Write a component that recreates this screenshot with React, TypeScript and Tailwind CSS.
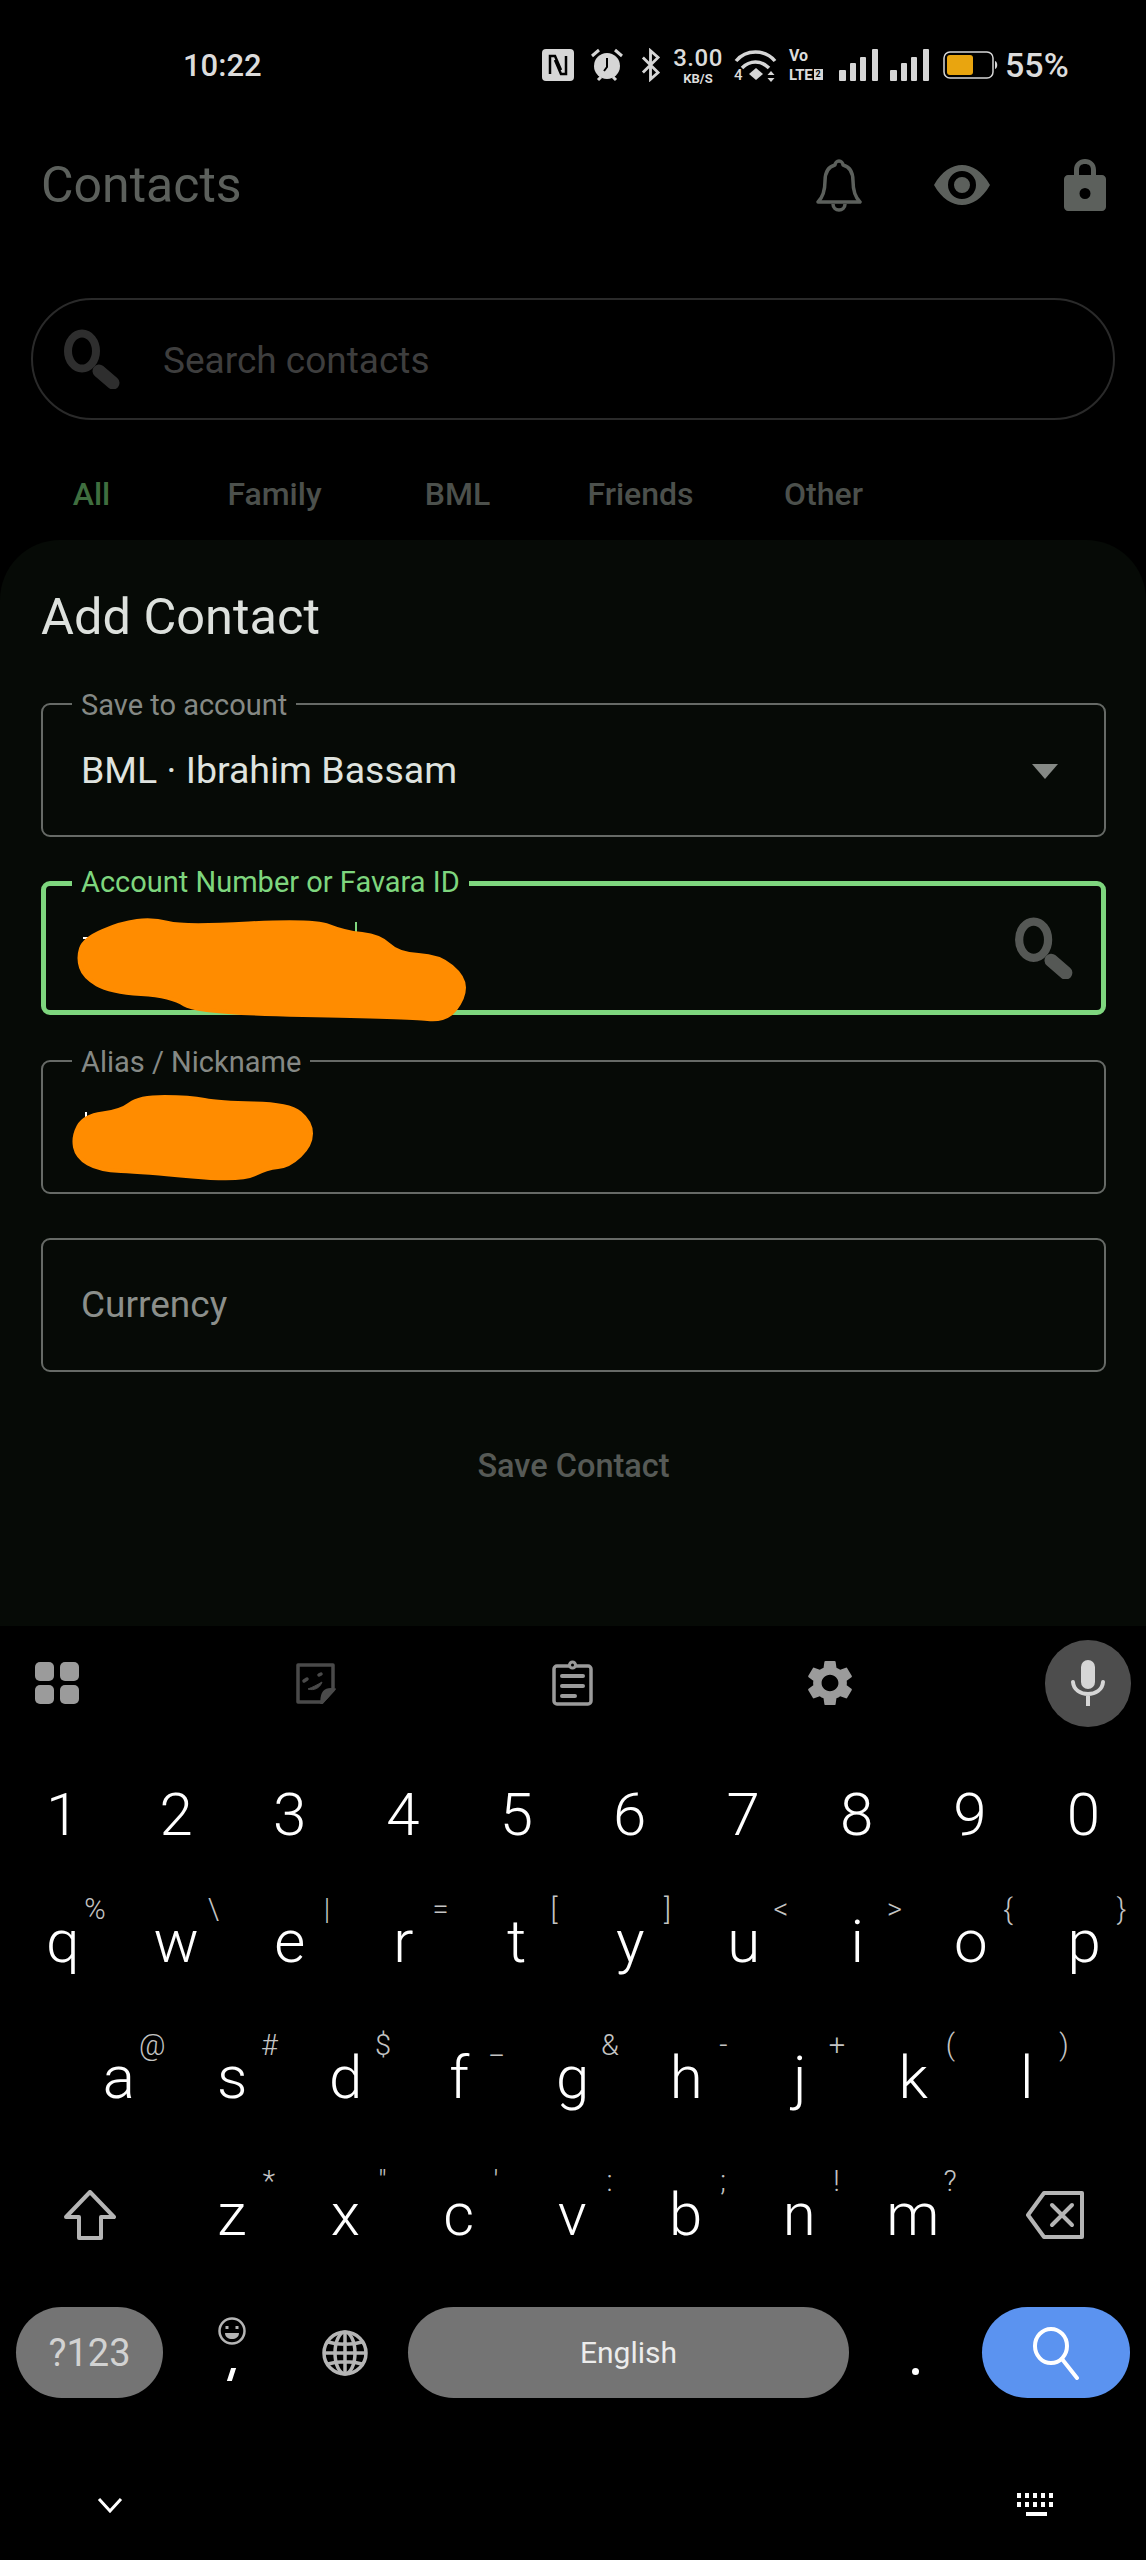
import React from "react";

const numberRow = ["1", "2", "3", "4", "5", "6", "7", "8", "9", "0"];
const topRow = [
  ["q", "%"], ["w", "\\"], ["e", "|"], ["r", "="], ["t", "["],
  ["y", "]"], ["u", "<"], ["i", ">"], ["o", "{"], ["p", "}"],
];
const homeRow = [
  ["a", "@"], ["s", "#"], ["d", "$"], ["f", "_"], ["g", "&"],
  ["h", "-"], ["j", "+"], ["k", "("], ["l", ")"],
];
const bottomRow = [
  ["z", "*"], ["x", '"'], ["c", "'"], ["v", ":"], ["b", ";"], ["n", "!"], ["m", "?"],
];

const blobOne = [
  [78, 959], [84, 940], [121, 924], [153, 920], [183, 928], [314, 921], [344, 933], [380, 937],
  [398, 955], [439, 957], [464, 978], [464, 999], [446, 1022], [409, 1018], [197, 1014],
  [172, 997], [110, 993], [84, 978],
];
const blobTwo = [
  [73, 1137], [84, 1116], [121, 1111], [139, 1097], [190, 1097], [219, 1103], [289, 1104],
  [311, 1122], [311, 1145], [289, 1166], [267, 1168], [241, 1181], [143, 1172], [99, 1170],
  [77, 1157],
];

// rounds the scribble: corners become curves through the edge midpoints
function blobPath(points: number[][]) {
  const mid = (a: number[], b: number[]) => [(a[0] + b[0]) / 2, (a[1] + b[1]) / 2];
  const start = mid(points[points.length - 1], points[0]);
  let d = `M${start[0]} ${start[1]}`;
  points.forEach((p, i) => {
    const m = mid(p, points[(i + 1) % points.length]);
    d += `Q${p[0]} ${p[1]} ${m[0]} ${m[1]}`;
  });
  return d + "Z";
}

function Magnifier({ className }: { className: string }) {
  return (
    <svg viewBox="0 0 60 60" className={className} fill="none" stroke="currentColor">
      <ellipse cx="19" cy="22" rx="14" ry="17.5" strokeWidth="8" />
      <path d="M36 42 L50 54" strokeWidth="13" strokeLinecap="round" />
    </svg>
  );
}

function Key({ letter, hint }: { letter: string; hint: string }) {
  const shifted = hint === "%" || hint === "@";
  return (
    <div className="relative flex h-full w-[113.5px] shrink-0 items-center justify-center">
      <span className="text-[60px] font-light leading-none text-white">{letter}</span>
      <span
        className={`absolute top-[19px] w-[24px] text-center text-[29px] font-light leading-[32px] text-[#c4c4c4] ${
          shifted ? "left-[77px]" : "left-[82px]"
        }`}
      >
        {hint}
      </span>
    </div>
  );
}

function Field({
  label,
  active,
  children,
}: {
  label?: string;
  active?: boolean;
  children?: React.ReactNode;
}) {
  return (
    <div
      className={`relative flex h-[134px] items-center rounded-[9px] pl-[38px] ${
        active ? "border-[5px] border-[#7ed67e]" : "border-2 border-[#666a66]"
      }`}
    >
      {label && (
        <span
          className={`absolute bg-[#060a06] px-[9px] text-[29px] leading-[38px] ${
            active ? "left-[26px] top-[-23px] text-[#7ed67e]" : "left-[29px] top-[-19px] text-[#858985]"
          }`}
        >
          {label}
        </span>
      )}
      {children}
    </div>
  );
}

function StatusBar() {
  return (
    <div className="flex h-[130px] items-center text-[#dcdcdc]">
      <span className="ml-[183px] w-[359px] text-[31px] font-medium leading-none">10:22</span>
      {/* nfc */}
      <svg viewBox="0 0 32 32" className="h-[32px] w-[32px]">
        <rect width="32" height="32" rx="4" fill="#d6d6d6" />
        <path d="M8 25V7h5l6 14M24 7v18h-5l-6-14" fill="none" stroke="#000" strokeWidth="2.500" />
      </svg>
      {/* alarm */}
      <svg viewBox="0 0 34 34" className="ml-[16px] h-[34px] w-[34px]" fill="none" stroke="#d6d6d6">
        <circle cx="17" cy="18" r="13" fill="#d6d6d6" stroke="none" />
        <path d="M17 10v9l-3 4" stroke="#000" strokeWidth="2" />
        <path d="M2 8l7-6M32 8l-7-6M8 32l3-3M26 32l-3-3" strokeWidth="3" />
      </svg>
      {/* bluetooth */}
      <svg viewBox="0 0 20 34" className="ml-[17px] h-[34px] w-[19px]" fill="none" stroke="#d6d6d6" strokeWidth="3">
        <path d="M2 9l16 16-8 7V2l8 7L2 25" />
      </svg>
      <div className="ml-[11px] flex w-[54px] flex-col items-center font-medium">
        <span className="text-[24px] leading-[24px] tracking-[0.5px]">3.00</span>
        <span className="mt-[2px] text-[13px] font-bold leading-[13px]">KB/S</span>
      </div>
      {/* wifi */}
      <div className="relative ml-[9px] h-[34px] w-[43px]">
        <svg viewBox="0 0 43 34" className="h-[34px] w-[43px]" fill="none" stroke="#d6d6d6" strokeWidth="3.500">
          <path d="M2 13C12 1 31 1 41 13M8 20c8-8 19-8 27 0" />
          <path d="M15 26l7-6 7 6-7 6z" fill="#d6d6d6" stroke="none" />
          <path d="M37 23l3.500 4h-7zM37 34l3.500-4h-7z" fill="#d6d6d6" stroke="none" />
        </svg>
        <span className="absolute bottom-[-1px] left-0 text-[15px] font-medium leading-none">4</span>
      </div>
      <div className="ml-[12px] flex w-[40px] flex-col gap-[3px] font-bold">
        <span className="text-[16px] leading-[16px]">Vo</span>
        <div className="flex items-center">
          <span className="text-[15px] leading-[16px] tracking-[-0.2px]">LTE</span>
          <span className="ml-[1px] flex h-[11px] w-[9px] items-center justify-center bg-[#d6d6d6] text-[9px] leading-none text-black">
            2
          </span>
        </div>
      </div>
      {/* sim signal */}
      <svg viewBox="0 0 39 32" className="ml-[10px] h-[32px] w-[39px]" fill="#d6d6d6">
        <rect x="0" y="21" width="7" height="11" rx="1" />
        <rect x="11" y="14" width="6" height="18" rx="1" />
        <rect x="21" y="8" width="6" height="24" rx="1" />
        <rect x="33" y="0" width="6" height="32" rx="1" />
      </svg>
      <svg viewBox="0 0 39 32" className="ml-[12px] h-[32px] w-[39px]" fill="#d6d6d6">
        <rect x="0" y="21" width="7" height="11" rx="1" />
        <rect x="11" y="14" width="6" height="18" rx="1" />
        <rect x="21" y="8" width="6" height="24" rx="1" />
        <rect x="33" y="0" width="6" height="32" rx="1" />
      </svg>
      {/* battery */}
      <svg viewBox="0 0 56 28" className="ml-[14px] h-[28px] w-[56px]" fill="none">
        <rect x="1" y="1" width="49" height="26" rx="6" stroke="#d6d6d6" strokeWidth="1.500" />
        <rect x="4" y="4" width="26" height="20" rx="3" fill="#e9a50f" />
        <path d="M52 10c3 1 3 7 0 8z" fill="#d6d6d6" />
      </svg>
      <span className="ml-[6px] text-[34px] font-medium leading-none">55%</span>
    </div>
  );
}

function Keyboard() {
  return (
    <div className="flex flex-1 flex-col bg-black">
      {/* toolbar */}
      <div className="flex h-[114px] items-center">
        <svg viewBox="0 0 44 42" className="ml-[35px] h-[42px] w-[44px]" fill="#9b9b9b">
          <rect width="19" height="19" rx="5" />
          <rect x="25" width="19" height="19" rx="5" />
          <rect y="23" width="19" height="19" rx="5" />
          <rect x="25" y="23" width="19" height="19" rx="5" />
        </svg>
        <svg viewBox="0 0 41 41" className="ml-[216px] h-[41px] w-[41px]" fill="none" stroke="#4a4a4a" strokeWidth="3.500">
          <path d="M3 2h35v25L27 39H3z" strokeLinejoin="round" />
          <path d="M38 27c-8-1-11 3-11 12l11-12z" fill="#4a4a4a" />
          <path d="M9 18l3-2M24 12l2-1" strokeLinecap="round" />
          <path d="M13 26c6 2 12-1 14-7-5 3-9 5-14 7z" fill="#4a4a4a" strokeWidth="1" />
        </svg>
        <svg viewBox="0 0 41 46" className="ml-[216px] h-[46px] w-[41px]" fill="none" stroke="#9b9b9b" strokeWidth="3.500">
          <rect x="2" y="6" width="37" height="38" rx="3" />
          <circle cx="20.500" cy="5" r="3" fill="#000" strokeWidth="3" />
          <path d="M10 16h21M10 26h21M10 36h13" strokeLinecap="round" strokeWidth="4" />
        </svg>
        <svg viewBox="2.600 2 18.800 20" className="ml-[215px] h-[46px] w-[44px]" preserveAspectRatio="none" fill="#9b9b9b">
          <path d="M19.140 12.940c.04-.3.060-.61.060-.94 0-.32-.020-.64-.070-.94l2.030-1.580a.49.49 0 0 0 .12-.61l-1.920-3.320a.488.488 0 0 0-.59-.22l-2.390.96c-.5-.38-1.030-.7-1.620-.94l-.36-2.540a.484.484 0 0 0-.48-.41h-3.840c-.24 0-.43.170-.47.410l-.36 2.540c-.59.240-1.130.570-1.620.940l-2.390-.960c-.22-.080-.47 0-.59.220L2.740 8.870c-.12.210-.08.470.12.610l2.030 1.580c-.05.300-.09.630-.09.940s.02.640.07.940l-2.030 1.580a.49.49 0 0 0-.12.610l1.920 3.320c.12.220.37.290.59.220l2.390-.960c.5.380 1.030.700 1.620.940l.36 2.540c.05.240.24.410.48.410h3.840c.24 0 .44-.170.47-.410l.36-2.540c.59-.240 1.130-.560 1.620-.940l2.390.960c.22.080.47 0 .59-.220l1.920-3.320c.12-.220.07-.470-.12-.610l-2.010-1.580zM12 15.600c-1.980 0-3.600-1.620-3.600-3.600s1.620-3.600 3.600-3.600 3.600 1.620 3.600 3.600-1.620 3.600-3.600 3.600z" />
        </svg>
        <div className="ml-[193px] flex h-[87px] w-[86px] items-center justify-center rounded-full bg-[#4d4d4d]">
          <svg viewBox="0 0 34 46" className="h-[46px] w-[34px]" fill="none" stroke="#d6d6d6">
            <rect x="10" y="0" width="14" height="29" rx="7" fill="#d6d6d6" stroke="none" />
            <path d="M2 22c1 16 29 16 30 0M17 36v10" strokeWidth="4" strokeLinecap="round" />
          </svg>
        </div>
      </div>

      {/* number row */}
      <div className="mt-[16px] flex h-[118px] px-[6px]">
        {numberRow.map((n) => (
          <div key={n} className="flex w-[113.5px] items-center justify-center text-[60px] font-light leading-none text-white">
            {n}
          </div>
        ))}
      </div>

      <div className="flex h-[136px] px-[6px]">
        {topRow.map(([l, h]) => (
          <Key key={l} letter={l} hint={h} />
        ))}
      </div>

      <div className="flex h-[136px] pl-[62px]">
        {homeRow.map(([l, h]) => (
          <Key key={l} letter={l} hint={h} />
        ))}
      </div>

      <div className="flex h-[137px] items-center">
        <div className="flex h-full w-[180px] shrink-0 items-center justify-center">
          <svg viewBox="0 0 52 50" className="h-[50px] w-[52px]" fill="none" stroke="#b5b5b5" strokeWidth="4" strokeLinejoin="round">
            <path d="M26 2L50 27H37V48H15V27H2z" />
          </svg>
        </div>
        <div className="ml-[-5px] flex h-full">
          {bottomRow.map(([l, h]) => (
            <Key key={l} letter={l} hint={h} />
          ))}
        </div>
        <div className="flex h-full flex-1 items-center justify-center pr-[6px]">
          <svg viewBox="0 0 58 48" className="h-[48px] w-[58px]" fill="none" stroke="#b5b5b5" strokeWidth="4" strokeLinejoin="round" strokeLinecap="round">
            <path d="M18 2H56V46H18L2 24z" />
            <path d="M26 14l20 20M46 14L26 34" />
          </svg>
        </div>
      </div>

      {/* space row */}
      <div className="mt-[24px] flex h-[91px] pl-[16px]">
        <div className="flex w-[147px] items-center justify-center rounded-full bg-[#747474] text-[38px] leading-none text-[#d2d2d2]">
          ?123
        </div>
        <div className="relative flex w-[137px] justify-center">
          <svg viewBox="0 0 28 28" className="mt-[10px] h-[28px] w-[28px]" fill="none" stroke="#b5b5b5" strokeWidth="2.500">
            <circle cx="14" cy="14" r="12.500" />
            <path d="M9 9v3M19 9v3" strokeWidth="3" />
            <path d="M7 16h14c0 8-14 8-14 0z" fill="#b5b5b5" stroke="none" />
          </svg>
          <span className="absolute bottom-[17px] left-[66px] h-[13px] w-[5px] skew-x-[-18deg] bg-white" />
        </div>
        <div className="flex w-[88px] items-center">
          <svg viewBox="0 0 46 46" className="h-[46px] w-[46px] translate-x-[22px]" fill="none" stroke="#b5b5b5" strokeWidth="3.500">
            <circle cx="23" cy="23" r="21" />
            <ellipse cx="23" cy="23" rx="10" ry="21" />
            <path d="M23 2v42M6 12c10 3 24 3 34 0M6 34c10-3 24-3 34 0M2 23h42" />
          </svg>
        </div>
        <div className="ml-[20px] flex w-[441px] items-center justify-center rounded-full bg-[#747474] text-[30px] text-[#ececec]">
          English
        </div>
        <div className="flex w-[133px] justify-center">
          <span className="mt-[61px] h-[7px] w-[7px] rounded-full bg-white" />
        </div>
        <div className="flex w-[148px] items-center justify-center rounded-full bg-[#5b93f0]">
          <svg viewBox="0 0 50 54" className="h-[54px] w-[50px]" fill="none" stroke="#ffffff" strokeWidth="4">
            <ellipse cx="20" cy="20" rx="16" ry="17" />
            <path d="M31 33l15 19" strokeLinecap="round" />
          </svg>
        </div>
      </div>

      {/* nav bar */}
      <div className="flex items-center justify-between pl-[97px] pr-[90px] pt-[95px]">
        <svg viewBox="0 0 26 16" className="h-[16px] w-[26px]" fill="none" stroke="#ffffff" strokeWidth="3">
          <path d="M2 2l11 12L24 2" />
        </svg>
        <svg viewBox="0 0 39 24" className="h-[24px] w-[39px]" fill="#ffffff">
          {[0, 8, 16, 24, 32].map((x) => (
            <React.Fragment key={x}>
              <rect x={x} y="0" width="4" height="5" />
              <rect x={x} y="9" width="4" height="5" />
            </React.Fragment>
          ))}
          <rect x="9" y="19" width="21" height="4" />
        </svg>
      </div>
    </div>
  );
}

export default function App() {
  return (
    <div className="flex h-[2560px] w-[1146px] flex-col overflow-hidden bg-black font-['Roboto',sans-serif] antialiased">
      <StatusBar />

      {/* app bar */}
      <div className="flex h-[110px] items-center pl-[41px] text-[#5c605c]">
        <h1 className="text-[50px] leading-none">Contacts</h1>
        <svg viewBox="0 0 46 54" className="ml-[574px] h-[54px] w-[46px]" fill="none" stroke="currentColor" strokeWidth="3.500" strokeLinejoin="round">
          <path d="M23 3c2 0 4 2 4 4 8 2 10 9 10 16 0 8 1 15 7 21H2c6-6 7-13 7-21 0-7 2-14 10-16 0-2 2-4 4-4z" />
          <path d="M17 46c0 8 12 8 12 0" />
        </svg>
        <svg viewBox="0 0 56 40" className="ml-[72px] h-[40px] w-[56px]" fill="currentColor">
          <path fillRule="evenodd" d="M0 20C8 6 18 0 28 0s20 6 28 20c-8 14-18 20-28 20S8 34 0 20zm28-14a14 14 0 1 0 0 28 14 14 0 0 0 0-28zm0 6a8 8 0 1 1 0 16 8 8 0 0 1 0-16z" />
        </svg>
        <svg viewBox="0 0 42 52" className="ml-[74px] h-[52px] w-[42px]" fill="currentColor">
          <path fillRule="evenodd" d="M10 16v-5C10 4 15 0 21 0s11 4 11 11v5h6c2 0 4 2 4 4v28c0 2-2 4-4 4H4c-2 0-4-2-4-4V20c0-2 2-4 4-4zm5 0h12v-5c0-4-2-6-6-6s-6 2-6 6zm6 13a5 5 0 1 0 0 11 5 5 0 0 0 0-11z" />
        </svg>
      </div>

      {/* search */}
      <div className="mx-[31px] mt-[58px] flex h-[122px] items-center rounded-full border-2 border-[#2a2a2a] pl-[30px]">
        <Magnifier className="h-[60px] w-[60px] text-[#2e2e2e]" />
        <span className="ml-[40px] mt-[3px] text-[37px] text-[#3e3e3e]">Search contacts</span>
      </div>

      {/* tabs */}
      <div className="mt-[28px] grid h-[92px] w-[915px] grid-cols-5 items-center text-center text-[32px] font-medium text-[#4c504c]">
        <span className="text-[#3f6e3f]">All</span>
        <span>Family</span>
        <span>BML</span>
        <span>Friends</span>
        <span>Other</span>
      </div>

      {/* bottom sheet */}
      <div className="h-[1086px] shrink-0 rounded-t-[60px] bg-[#060a06] pl-[41px] pr-[40px] pt-[40px]">
        <h2 className="text-[50.5px] leading-[74px] text-[#dde1dd]">Add Contact</h2>
        <div className="mt-[49px] flex flex-col gap-[44.3px]">
          <Field label="Save to account">
            <span className="text-[37.5px] text-[#dfe3df]">BML · Ibrahim Bassam</span>
            <svg viewBox="0 0 26 15" className="absolute right-[46px] top-[59px] h-[15px] w-[26px]" fill="#858985">
              <path d="M0 0h26L13 15z" />
            </svg>
          </Field>
          <Field label="Account Number or Favara ID" active>
            <span className="absolute left-[37px] top-[51px] h-[2px] w-[14px] bg-white" />
            <span className="absolute left-[309px] top-[36px] h-[12px] w-[2px] bg-[#7ed67e]" />
            <Magnifier className="absolute right-[25px] top-[31px] h-[62px] w-[62px] text-[#555855]" />
            {/* redaction */}
            <svg viewBox="60 910 420 120" className="absolute left-[14px] top-[23px] z-10 h-[120px] w-[420px]">
              <path d={blobPath(blobOne)} fill="#ff8c00" stroke="#ff8c00" strokeWidth="4" strokeLinejoin="round" />
            </svg>
          </Field>
          <Field label="Alias / Nickname">
            <span className="absolute left-[42px] top-[50px] h-[10px] w-[2px] bg-white" />
            <svg viewBox="60 1085 270 105" className="absolute left-[17px] top-[23px] z-10 h-[105px] w-[270px]">
              <path d={blobPath(blobTwo)} fill="#ff8c00" stroke="#ff8c00" strokeWidth="4" strokeLinejoin="round" />
            </svg>
          </Field>
          <Field>
            <span className="text-[37px] text-[#8b8f8b]">Currency</span>
          </Field>
        </div>
        <div className="mt-[64px] text-center text-[32.5px] font-medium leading-[60px] text-[#565a56]">
          Save Contact
        </div>
      </div>

      <Keyboard />
    </div>
  );
}
